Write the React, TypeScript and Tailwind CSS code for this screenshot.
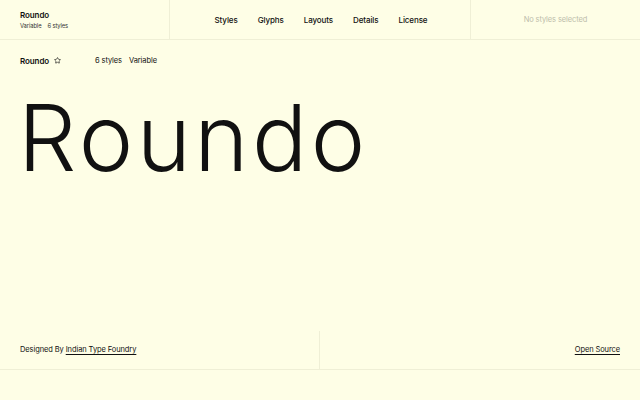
import { Star } from 'lucide-react';

const navItems = ['Styles', 'Glyphs', 'Layouts', 'Details', 'License'];

const App = () => {
    return (
        <div className="w-[640px] h-[400px] bg-[#fefee6] text-[#111] flex flex-col overflow-hidden tracking-[-0.1px]" style={{ fontFamily: 'Inter, "Liberation Sans", sans-serif' }}>
            {/* header */}
            <div className="h-10 flex border-b border-[#efefd6] shrink-0">
                <div className="w-[170px] border-r border-[#efefd6] flex flex-col justify-center pl-5 pt-[1px]">
                    <span className="text-[8px] font-semibold leading-[11px]">Roundo</span>
                    <div className="flex gap-[6px] text-[5.8px] text-[#333] leading-[9px]">
                        <span>Variable</span>
                        <span>6 styles</span>
                    </div>
                </div>
                <div className="w-[300px] flex items-center justify-center gap-[20px] text-[8px] font-medium pl-[2px]">
                    {navItems.map((item) => (
                        <span key={item}>{item}</span>
                    ))}
                </div>
                <div className="flex-1 border-l border-[#efefd6] flex items-center justify-center text-[7.5px] text-[#bdbdab]">
                    No styles selected
                </div>
            </div>

            {/* title row */}
            <div className="flex items-center h-[41px] pl-5 text-[7.5px]">
                <span className="font-semibold text-[8px]">Roundo</span>
                <Star className="w-[7px] h-[7px] ml-[5px]" strokeWidth={2.2} />
                <span className="ml-[34px]">6 styles</span>
                <span className="ml-[7px]">Variable</span>
            </div>

            {/* specimen */}
            <div className="flex-1 pl-[18px]">
                <div className="text-[92px] font-light leading-none tracking-[3.5px] mt-[11px]">
                    Roundo
                </div>
            </div>

            {/* footer */}
            <div className="h-[39px] flex border-b border-[#efefd6] shrink-0 text-[7.5px]">
                <div className="w-[320px] border-r border-[#efefd6] flex items-center pl-5">
                    <span>Designed By&nbsp;</span>
                    <span className="underline underline-offset-2">Indian Type Foundry</span>
                </div>
                <div className="flex-1 flex items-center justify-end pr-5">
                    <span className="underline underline-offset-2">Open Source</span>
                </div>
            </div>
            <div className="h-[30px] shrink-0" />
        </div>
    );
};

export default App;
